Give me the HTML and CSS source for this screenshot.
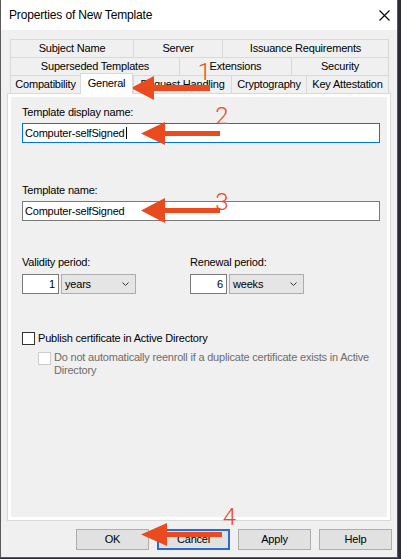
FILE: index.html
```html
<!DOCTYPE html>
<html lang="en">
<head>
<meta charset="utf-8">
<title>Properties of New Template</title>
<link rel="stylesheet" href="styles.css">
</head>
<body>
<div class="window">
  <div class="titlebar">
    <span class="title">Properties of New Template</span>
    <svg class="close" width="11" height="11" viewBox="0 0 11 11"><path d="M0.5 0.5L10.5 10.5M10.5 0.5L0.5 10.5" stroke="#000" stroke-width="1.1" fill="none"/></svg>
  </div>
  <div class="client">
    <div class="tabs">
      <div class="tabrow row1">
        <div class="tab">Subject Name</div>
        <div class="tab">Server</div>
        <div class="tab">Issuance Requirements</div>
      </div>
      <div class="tabrow row2">
        <div class="tab">Superseded Templates</div>
        <div class="tab">Extensions</div>
        <div class="tab">Security</div>
      </div>
      <div class="tabrow row3">
        <div class="tab">Compatibility</div>
        <div class="tab sel">General</div>
        <div class="tab">Request Handling</div>
        <div class="tab">Cryptography</div>
        <div class="tab">Key Attestation</div>
      </div>
    </div>
    <div class="panel">
      <div class="page">
        <div class="label">Template display name:</div>
        <div class="field focus"><span>Computer-selfSigned</span><span class="caret"></span></div>
        <div class="label gap-large">Template name:</div>
        <div class="field"><span>Computer-selfSigned</span></div>
        <div class="periods">
          <div class="period">
            <div class="label">Validity period:</div>
            <div class="period-row">
              <div class="num">1</div>
              <div class="select"><span>years</span><svg width="7" height="4" viewBox="0 0 7 4"><polyline points="0.5,0.5 3.5,3.5 6.5,0.5" fill="none" stroke="#333" stroke-width="1"/></svg></div>
            </div>
          </div>
          <div class="period">
            <div class="label">Renewal period:</div>
            <div class="period-row">
              <div class="num">6</div>
              <div class="select"><span>weeks</span><svg width="7" height="4" viewBox="0 0 7 4"><polyline points="0.5,0.5 3.5,3.5 6.5,0.5" fill="none" stroke="#333" stroke-width="1"/></svg></div>
            </div>
          </div>
        </div>
        <div class="check">
          <div class="box"></div>
          <div class="check-label">Publish certificate in Active Directory</div>
        </div>
        <div class="check sub disabled">
          <div class="box"></div>
          <div class="check-label">Do not automatically reenroll if a duplicate certificate exists in Active Directory</div>
        </div>
      </div>
    </div>
    <div class="buttons">
      <div class="btn">OK</div>
      <div class="btn default">Cancel</div>
      <div class="btn">Apply</div>
      <div class="btn">Help</div>
    </div>
  </div>
  <svg class="annot" width="401" height="559" viewBox="0 0 401 559">
    <g fill="#e94b1e">
      <polygon points="131,88 154,76 154,100"/>
      <rect x="152" y="85" width="58" height="6"/>
      <polygon points="141,133.5 165,122 165,145"/>
      <rect x="163" y="131" width="57" height="5"/>
      <polygon points="141,210.5 165,198 165,223"/>
      <rect x="163" y="208" width="57" height="5"/>
      <polygon points="141,534.5 167,523 167,546"/>
      <rect x="165" y="532" width="57" height="5"/>
    </g>
    <g class="nums" fill="#e94b1e" text-anchor="middle">
      <text x="204.5" y="80">1</text>
      <text x="222" y="124">2</text>
      <text x="222" y="210">3</text>
      <text x="229.5" y="525">4</text>
    </g>
  </svg>
</div>
</body>
</html>
```

FILE: styles.css
```css
html, body {
  margin: 0;
  padding: 0;
}
body {
  background: #2d2b3a;
  width: 401px;
  height: 559px;
  overflow: hidden;
  font-family: "Liberation Sans", Arial, sans-serif;
  font-size: 11px;
  letter-spacing: -0.2px;
  color: #000;
}
.window {
  position: relative;
  width: 398px;
  height: 558px;
  box-sizing: border-box;
  border-left: 1px solid #5a5a5a;
  border-right: 1px solid #5a5a5a;
  border-bottom: 1px solid #5a5a5a;
  background: #f0f0f0;
}
.titlebar {
  height: 30px;
  background: #fff;
  display: flex;
  align-items: center;
  justify-content: space-between;
  padding: 0 7px 0 8px;
}
.title {
  font-size: 12px;
  letter-spacing: -0.15px;
}
.close {
  display: block;
}
.client {
  padding-top: 9px;
}
.tabs {
  margin: 0 8px 0 9px;
}
.tabrow {
  display: grid;
  height: 18px;
}
.row1 { grid-template-columns: 123px 89px 167px; }
.row2 { grid-template-columns: 169px 112px 98px; }
.row3 { grid-template-columns: 70px 53px 98px 75px 83px; }
.tab {
  box-sizing: border-box;
  height: 18px;
  border-top: 1px solid #d9d9d9;
  border-left: 1px solid #d9d9d9;
  line-height: 17px;
  text-align: center;
  white-space: nowrap;
  background: #f0f0f0;
}
.tab:last-child {
  border-right: 1px solid #d9d9d9;
}
.tab.sel {
  position: relative;
  z-index: 1;
  background: #fff;
  height: 21px;
  margin-top: -2px;
  margin-bottom: -1px;
  line-height: 18px;
  border-right: 1px solid #d9d9d9;
}
.panel {
  margin: 0 6px;
  height: 428px;
  box-sizing: border-box;
  border: 1px solid #d9d9d9;
  background: #fff;
  padding: 3px;
}
.page {
  height: 100%;
  box-sizing: border-box;
  background: #f0f0f0;
  padding: 9px 7px 0 11px;
}
.label {
  line-height: 13px;
  white-space: nowrap;
}
.gap-large {
  margin-top: 41px;
}
.field {
  margin-top: 4px;
  height: 20px;
  box-sizing: border-box;
  border: 1px solid #7a7a7a;
  background: #fff;
  display: flex;
  align-items: center;
  padding-left: 2px;
}
.field.focus {
  border-color: #0078d7;
}
.caret {
  width: 1px;
  height: 12px;
  background: #000;
  margin-left: 1px;
}
.periods {
  margin-top: 35px;
  display: grid;
  grid-template-columns: 168px auto;
}
.period-row {
  margin-top: 5px;
  display: flex;
  gap: 2px;
}
.num {
  width: 37px;
  height: 20px;
  box-sizing: border-box;
  border: 1px solid #7a7a7a;
  background: #fff;
  text-align: right;
  padding-right: 3px;
  line-height: 18px;
}
.select {
  width: 75px;
  height: 20px;
  box-sizing: border-box;
  border: 1px solid #adadad;
  background: #e5e5e5;
  display: flex;
  align-items: center;
  justify-content: space-between;
  padding: 0 6px 0 3px;
}
.select svg {
  display: block;
}
.check {
  margin-top: 38px;
  display: flex;
  align-items: flex-start;
  gap: 3px;
  line-height: 13px;
}
.box {
  flex: none;
  width: 13px;
  height: 13px;
  box-sizing: border-box;
  border: 1px solid #333;
  background: #fff;
}
.check.sub {
  margin-top: 6px;
  margin-left: 16px;
}
.check.disabled .box {
  border-color: #cccccc;
  margin-top: 1px;
}
.check.disabled .check-label {
  color: #6d6d6d;
}
.buttons {
  margin-top: 8px;
  display: flex;
  justify-content: flex-end;
  gap: 8px;
  padding-right: 5px;
}
.btn {
  width: 73px;
  height: 21px;
  box-sizing: border-box;
  border: 1px solid #adadad;
  background: #e1e1e1;
  text-align: center;
  line-height: 19px;
}
.btn.default {
  border: 2px solid #2a6ad2;
  line-height: 17px;
}
.annot {
  position: absolute;
  left: -1px;
  top: 0;
  pointer-events: none;
  overflow: visible;
}
.nums text {
  font-family: Roboto, "Liberation Sans", sans-serif;
  font-weight: 300;
  font-size: 24px;
  letter-spacing: 0;
}
```
